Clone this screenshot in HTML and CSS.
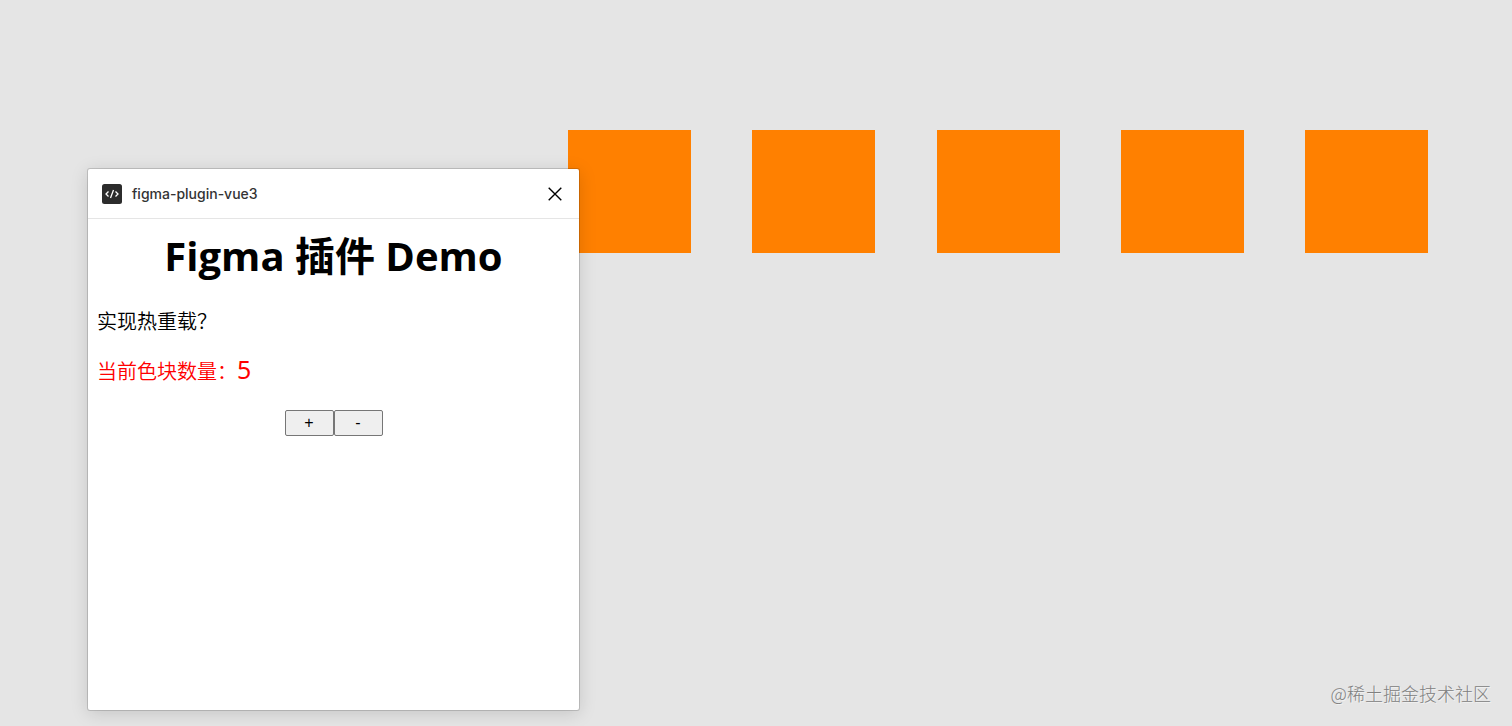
FILE: index.html
```html
<!DOCTYPE html>
<html lang="zh-CN">
<head>
    <meta charset="UTF-8">
    <meta name="viewport" content="width=device-width, initial-scale=1.0">
    <title>figma-plugin-vue3</title>
    <link rel="stylesheet" href="styles.css">
</head>
<body>

<main class="canvas">
    <div class="blocks">
        <div class="block"></div>
        <div class="block"></div>
        <div class="block"></div>
        <div class="block"></div>
        <div class="block"></div>
    </div>

    <section class="plugin">
        <header class="plugin-header">
            <svg class="plugin-icon" viewBox="0 0 20 20" aria-hidden="true">
                <rect width="20" height="20" rx="2.500" fill="#2c2c2c"/>
                <path d="M6.500 7.500L4 10l2.500 2.500M13.500 7.500L16 10l-2.500 2.500M11.500 6l-3 8" fill="none" stroke="#fff" stroke-width="1.300"/>
            </svg>
            <span class="plugin-name">figma-plugin-vue3</span>
            <button class="close" type="button" aria-label="关闭">
                <svg viewBox="0 0 14 14" aria-hidden="true">
                    <path d="M.7.7l12.600 12.600M13.300.7L.7 13.300" fill="none" stroke="#000" stroke-width="1.400"/>
                </svg>
            </button>
        </header>
        <div class="plugin-body">
            <h1>Figma 插件 Demo</h1>
            <p>实现热重载？</p>
            <p class="count">当前色块数量：<span class="number">5</span></p>
            <div class="actions">
                <button class="step" type="button">+</button>
                <button class="step" type="button">-</button>
            </div>
        </div>
    </section>

    <footer class="watermark">@稀土掘金技术社区</footer>
</main>

</body>
</html>
```

FILE: styles.css
```css
* {
    box-sizing: border-box;
}
body {
    margin: 0;
    font-family: "Open Sans", "Noto Sans CJK SC", sans-serif;
    color: #000;
}
.canvas {
    position: relative;
    display: flex;
    flex-direction: column;
    min-height: 100vh;
    background-color: #e5e5e5;
}
.blocks {
    display: flex;
    justify-content: space-between;
    padding: 130px 84px 0 568px;
}
.block {
    width: 123px;
    height: 123px;
    background-color: #ff8000;
}
/* plugin window floats over the canvas */
.plugin {
    position: absolute;
    top: 169px;
    left: 88px;
    width: 491px;
    height: 541px;
    background-color: #fff;
    border-radius: 2px;
    box-shadow: 0 0 0 1px rgba(0, 0, 0, 0.15), 0 3px 18px rgba(0, 0, 0, 0.15);
}
.plugin-header {
    display: flex;
    align-items: center;
    gap: 10px;
    height: 50px;
    padding: 0 14px;
    border-bottom: 1px solid #e5e5e5;
}
.plugin-icon {
    width: 20px;
    height: 20px;
}
.plugin-name {
    flex: 1;
    font-family: Inter, sans-serif;
    font-size: 14px;
    font-weight: 500;
    color: #333;
}
.close {
    display: flex;
    padding: 3px;
    border: none;
    background: none;
    cursor: pointer;
}
.close svg {
    width: 14px;
    height: 14px;
}
.plugin-body {
    padding: 9px;
}
h1 {
    margin: 0 0 22px;
    font-size: 40px;
    line-height: 56px;
    text-align: center;
}
p {
    margin: 0 0 18px;
    font-size: 20px;
    font-weight: 350;
    line-height: 32px;
}
.count {
    color: #f00;
}
.number {
    font-family: "Noto Sans", sans-serif;
    font-size: 25px;
    font-weight: 400;
    line-height: 1;
}
.actions {
    display: flex;
    justify-content: center;
    margin-top: 22px;
}
.step {
    width: 49px;
    height: 26px;
    padding: 0;
    border: 1px solid #767676;
    border-radius: 2px;
    background-color: #efefef;
    font-family: "Liberation Sans", Arial, sans-serif;
    font-size: 16px;
}
.watermark {
    margin-top: auto;
    padding: 0 21px 20px;
    font-family: "Noto Sans CJK SC", sans-serif;
    font-size: 18px;
    font-weight: 300;
    line-height: 26px;
    text-align: right;
    color: #808080;
    text-shadow: 1px 1px 0 #f2f2f2;
}
```
